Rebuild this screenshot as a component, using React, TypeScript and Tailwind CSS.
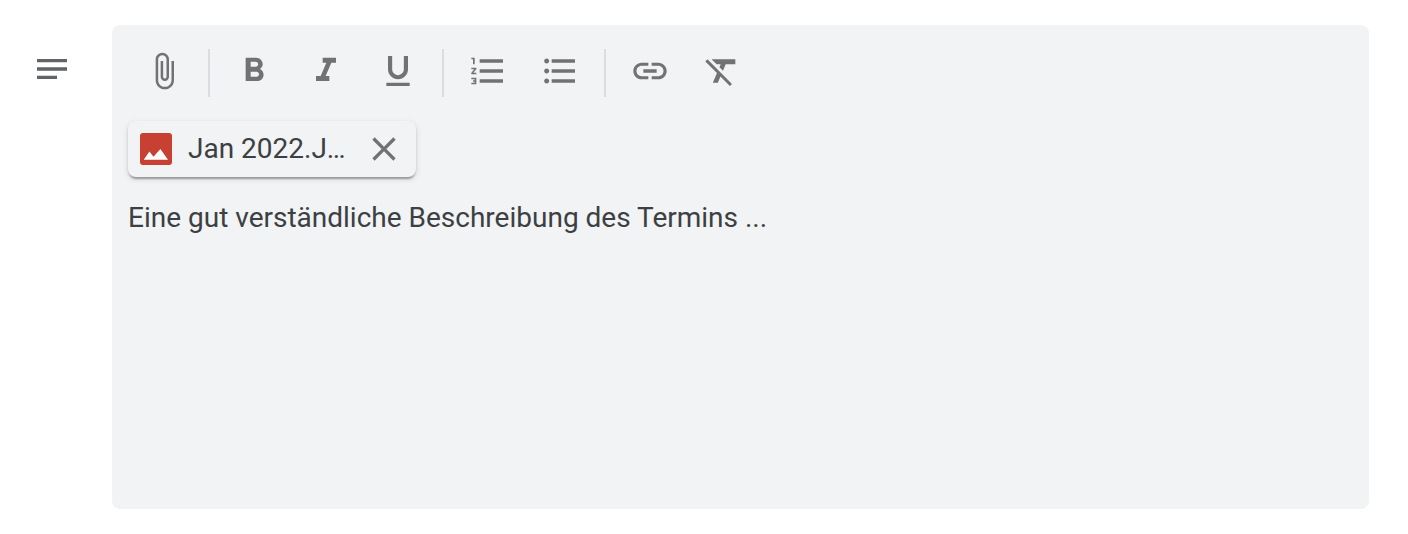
import type { ReactNode } from "react";

const paths = {
  notes: "M21 11.01L3 11v2h18zM3 16h12v2H3zM21 6H3v2.01L21 8z",
  attach:
    "M16.5 6v11.5c0 2.21-1.79 4-4 4s-4-1.79-4-4V5a2.5 2.5 0 0 1 5 0v10.5c0 .55-.45 1-1 1s-1-.45-1-1V6H10v9.5a2.5 2.5 0 0 0 5 0V5c0-2.21-1.79-4-4-4S7 2.79 7 5v12.5c0 3.04 2.46 5.5 5.5 5.5s5.5-2.46 5.5-5.5V6h-1.5z",
  bold: "M15.6 10.79c.97-.67 1.65-1.77 1.65-2.79 0-2.26-1.75-4-4-4H7v14h7.04c2.09 0 3.71-1.7 3.71-3.79 0-1.52-.86-2.82-2.15-3.42zM10 6.5h3c.83 0 1.5.67 1.5 1.5s-.67 1.5-1.5 1.5h-3v-3zm3.5 9H10v-3h3.5c.83 0 1.5.67 1.5 1.5s-.67 1.5-1.5 1.5z",
  italic: "M10 4v3h2.21l-3.42 8H6v3h8v-3h-2.21l3.42-8H18V4z",
  underline:
    "M12 17c3.31 0 6-2.69 6-6V3h-2.5v8c0 1.93-1.57 3.5-3.5 3.5S8.5 12.93 8.5 11V3H6v8c0 3.31 2.69 6 6 6zm-7 2v2h14v-2H5z",
  numbered:
    "M2 17h2v.5H3v1h1v.5H2v1h3v-4H2v1zm1-9h1V4H2v1h1v3zm-1 3h1.8L2 13.1v.9h3v-1H3.2L5 10.9V10H2v1zm5-6v2h14V5H7zm0 14h14v-2H7v2zm0-6h14v-2H7v2z",
  bulleted:
    "M4 10.5c-.83 0-1.5.67-1.5 1.5s.67 1.5 1.5 1.5 1.5-.67 1.5-1.5-.67-1.5-1.5-1.5zm0-6c-.83 0-1.5.67-1.5 1.5S3.17 7.5 4 7.5 5.5 6.83 5.5 6 4.83 4.5 4 4.5zm0 12c-.83 0-1.5.68-1.5 1.5s.68 1.5 1.5 1.5 1.5-.68 1.5-1.5-.67-1.5-1.5-1.5zM7 19h14v-2H7v2zm0-6h14v-2H7v2zm0-8v2h14V5H7z",
  link: "M3.9 12c0-1.71 1.39-3.1 3.1-3.1h4V7H7c-2.76 0-5 2.24-5 5s2.24 5 5 5h4v-1.9H7c-1.71 0-3.1-1.39-3.1-3.1zM8 13h8v-2H8v2zm9-6h-4v1.9h4c1.71 0 3.1 1.39 3.1 3.1s-1.39 3.1-3.1 3.1h-4V17h4c2.76 0 5-2.24 5-5s-2.24-5-5-5z",
  clear:
    "M3.27 5L2 6.27l6.97 6.97L6.5 19h3l1.57-3.66L16.73 21 18 19.73 3.55 5.27 3.27 5zM6 5v.18L8.82 8h2.4l-.72 1.68 2.1 2.1L14.21 8H20V5H6z",
  close:
    "M19 6.41L17.59 5 12 10.59 6.41 5 5 6.41 10.59 12 5 17.59 6.41 19 12 13.41 17.59 19 19 17.59 13.41 12z",
};

function Icon({ name }: { name: keyof typeof paths }) {
  return (
    <svg viewBox="0 0 24 24" className="size-10 shrink-0 fill-current" aria-hidden="true">
      <path d={paths[name]} />
    </svg>
  );
}

function Tool({ name, label }: { name: keyof typeof paths; label: string }) {
  return (
    <button type="button" aria-label={label} className="block size-10">
      <Icon name={name} />
    </button>
  );
}

function Group({ children }: { children: ReactNode }) {
  return <div className="flex gap-8 pt-0.5">{children}</div>;
}

function Divider() {
  return <div className="h-12 w-0.5 bg-[#dadce0]" />;
}

export default function App() {
  return (
    <div className="flex h-[534px] w-[1408px] items-start bg-white pt-[25px] pl-8 font-['Roboto',sans-serif] text-[28px] text-[#3c4043]">
      <div className="mt-6 text-[#626367]">
        <Icon name="notes" />
      </div>
      <section className="ml-10 h-[484px] w-[1257px] rounded-lg bg-[#f1f3f4] px-4 pt-6">
        <div className="flex h-12 gap-6 pl-4 text-[#717274]">
          <Group>
            <Tool name="attach" label="Anhang hinzufügen" />
          </Group>
          <Divider />
          <Group>
            <Tool name="bold" label="Fett" />
            <Tool name="italic" label="Kursiv" />
            <Tool name="underline" label="Unterstrichen" />
          </Group>
          <Divider />
          <Group>
            <Tool name="numbered" label="Nummerierte Liste" />
            <Tool name="bulleted" label="Aufzählungsliste" />
          </Group>
          <Divider />
          <Group>
            <Tool name="link" label="Link einfügen" />
            <Tool name="clear" label="Formatierung entfernen" />
          </Group>
        </div>
        <div className="mt-6 flex h-14 w-72 items-center rounded-lg bg-[#f1f3f4] px-3 shadow-[0_4px_2px_-2px_rgba(0,0,0,0.2),0_2px_2px_0_rgba(0,0,0,0.14),0_2px_6px_0_rgba(0,0,0,0.12)]">
          <svg viewBox="0 0 32 32" className="size-8 shrink-0" aria-hidden="true">
            <rect width="32" height="32" rx="3" fill="#c84031" />
            <path d="M3.7 26.7 9.4 18.5 13.5 23.8 20.4 16 28 26.7Z" fill="#fff" />
          </svg>
          <span className="ml-4 flex-1 whitespace-nowrap leading-10">Jan 2022.J…</span>
          <button type="button" aria-label="Anhang entfernen" className="block size-10 text-[#717274]">
            <Icon name="close" />
          </button>
        </div>
        <p className="mt-[21px] whitespace-nowrap leading-10">
          Eine gut verständliche Beschreibung des Termins ...
        </p>
      </section>
    </div>
  );
}
